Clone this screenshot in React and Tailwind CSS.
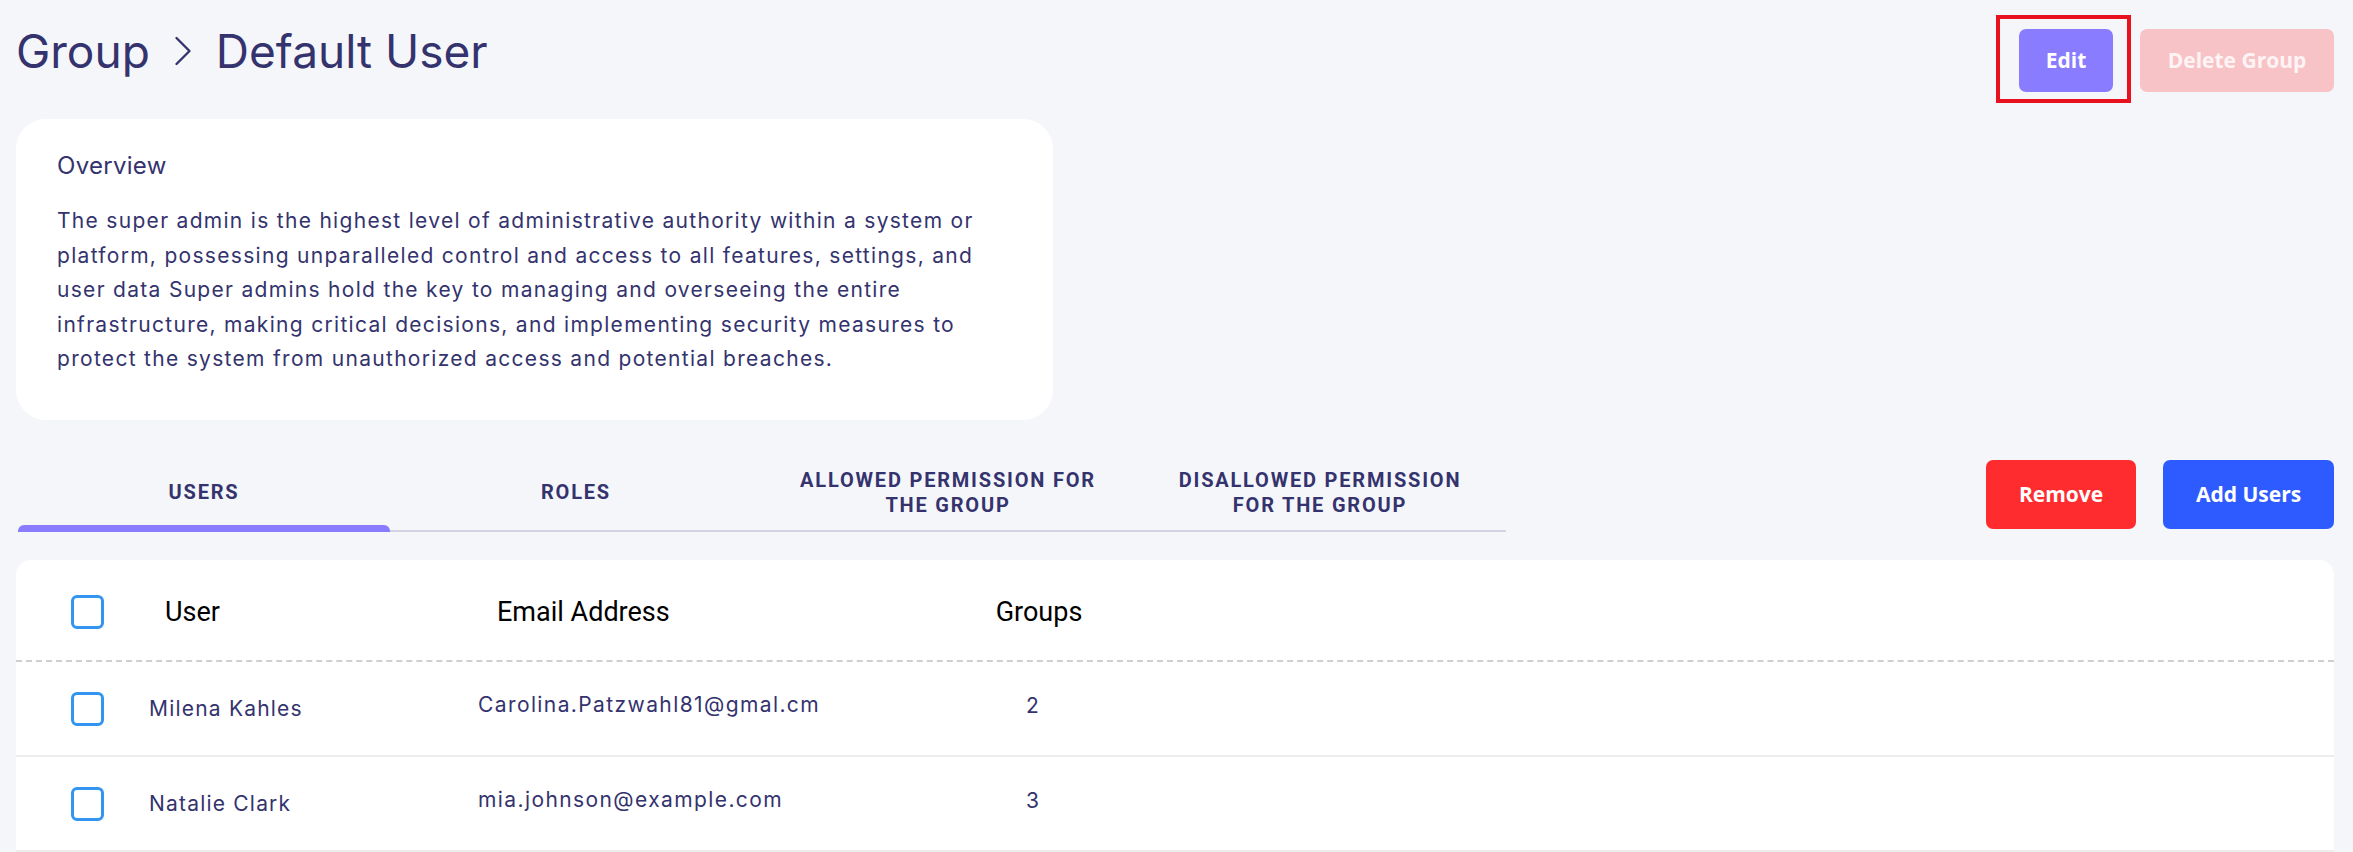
import { ChevronRight } from "lucide-react";

const NAVY = "text-[#34336e]";
const BODY = "font-['Inter','Noto_Sans',sans-serif]";

const overviewLines = [
  "The super admin is the highest level of administrative authority within a system or",
  "platform, possessing unparalleled control and access to all features, settings, and",
  "user data Super admins hold the key to managing and overseeing the entire",
  "infrastructure, making critical decisions, and implementing security measures to",
  "protect the system from unauthorized access and potential breaches.",
];

const tabs = [
  { lines: ["USERS"], active: true },
  { lines: ["ROLES"] },
  { lines: ["ALLOWED PERMISSION FOR", "THE GROUP"] },
  { lines: ["DISALLOWED PERMISSION", "FOR THE GROUP"] },
];

const users = [
  { name: "Milena Kahles", email: "Carolina.Patzwahl81@gmal.cm", groups: 2 },
  { name: "Natalie Clark", email: "mia.johnson@example.com", groups: 3 },
];

const Checkbox = () => (
  <span className="block w-[33px] h-[34px] rounded-[6px] border-[3px] border-[#3295ef] bg-white" />
);

export default function App() {
  return (
    <div className="min-h-[852px] bg-[#f5f6fa] pl-4 pr-[19px]">
      {/* header */}
      <div className="h-[119px] flex items-start justify-between">
        <h1 className={`pt-[25px] flex items-center text-[46px] leading-none ${NAVY} ${BODY} font-normal`}>
          <span>Group</span>
          <ChevronRight className="mx-[7px] w-[52px] h-[52px]" strokeWidth={1.1} />
          <span>Default User</span>
        </h1>
        <div className="pt-[29px] flex items-start gap-[27px]">
          <div className="relative">
            <button className="w-[94px] h-[63px] rounded-[7px] bg-[#8a7cff] text-white text-[21px] font-bold font-['Open_Sans',sans-serif]">
              Edit
            </button>
            <span className="absolute left-[-23px] top-[-14px] w-[135px] h-[88px] border-4 border-[#e8121e] pointer-events-none" />
          </div>
          <button className="w-[194px] h-[63px] rounded-[7px] bg-[#f7c3c6] text-[#fff4f5] text-[21px] font-bold font-['Open_Sans',sans-serif]">
            Delete Group
          </button>
        </div>
      </div>

      {/* overview */}
      <div className={`w-[1037px] h-[301px] rounded-[30px] bg-white pl-[41px] pt-[29px] ${NAVY} ${BODY}`}>
        <h2 className="text-[24px] leading-[36px] font-normal tracking-[0.3px]">Overview</h2>
        <div className="mt-[20px] text-[21px] leading-[34.5px] tracking-[1.3px]">
          {overviewLines.map((l) => (
            <p key={l}>{l}</p>
          ))}
        </div>
      </div>

      {/* tabs + actions */}
      <div className="mt-[40px] flex justify-between items-start">
        <div className="ml-[2px] w-[1488px] flex border-b-2 border-[#d2d2e0]">
          {tabs.map((t) => (
            <div key={t.lines[0]} className="w-[372px] flex flex-col">
              <div
                className={`h-[65px] flex flex-col items-center justify-center text-center text-[20px] leading-[25px] font-bold tracking-[1.8px] ${NAVY} font-['Roboto',sans-serif]`}
              >
                {t.lines.map((l) => (
                  <span key={l}>{l}</span>
                ))}
              </div>
              <div className={`h-[7px] -mb-[2px] rounded-t-[6px] ${t.active ? "bg-[#8a7cfe]" : ""}`} />
            </div>
          ))}
        </div>
        <div className="flex gap-[27px] font-['Open_Sans',sans-serif] text-[21px] font-bold text-white">
          <button className="w-[150px] h-[69px] rounded-[7px] bg-[#ff2c2f]">Remove</button>
          <button className="w-[171px] h-[69px] rounded-[7px] bg-[#2e5bff]">Add Users</button>
        </div>
      </div>

      {/* table */}
      <div className="mt-[28px] rounded-t-[15px] bg-white">
        <div className="h-[102px] pt-[4px] grid grid-cols-[133px_329px_517px_1fr] items-center border-b-2 border-dashed border-[#cfcfcf] font-['Roboto',sans-serif] text-[27px] text-black">
          <div className="pl-[55px]">
            <Checkbox />
          </div>
          <div className="pl-[16px]">User</div>
          <div className="pl-[19px]">Email Address</div>
          <div className="w-[88px] text-center">Groups</div>
        </div>
        {users.map((u) => (
          <div
            key={u.email}
            className={`h-[95px] grid grid-cols-[133px_329px_517px_1fr] items-center border-b-2 border-[#ededed] text-[21px] ${NAVY} ${BODY}`}
          >
            <div className="pl-[55px]">
              <Checkbox />
            </div>
            <div className="pt-[1px] tracking-[1.2px]">{u.name}</div>
            <div className="pb-[7px] tracking-[1.4px]">{u.email}</div>
            <div className="pl-[31px] pb-[6px]">{u.groups}</div>
          </div>
        ))}
      </div>
    </div>
  );
}
